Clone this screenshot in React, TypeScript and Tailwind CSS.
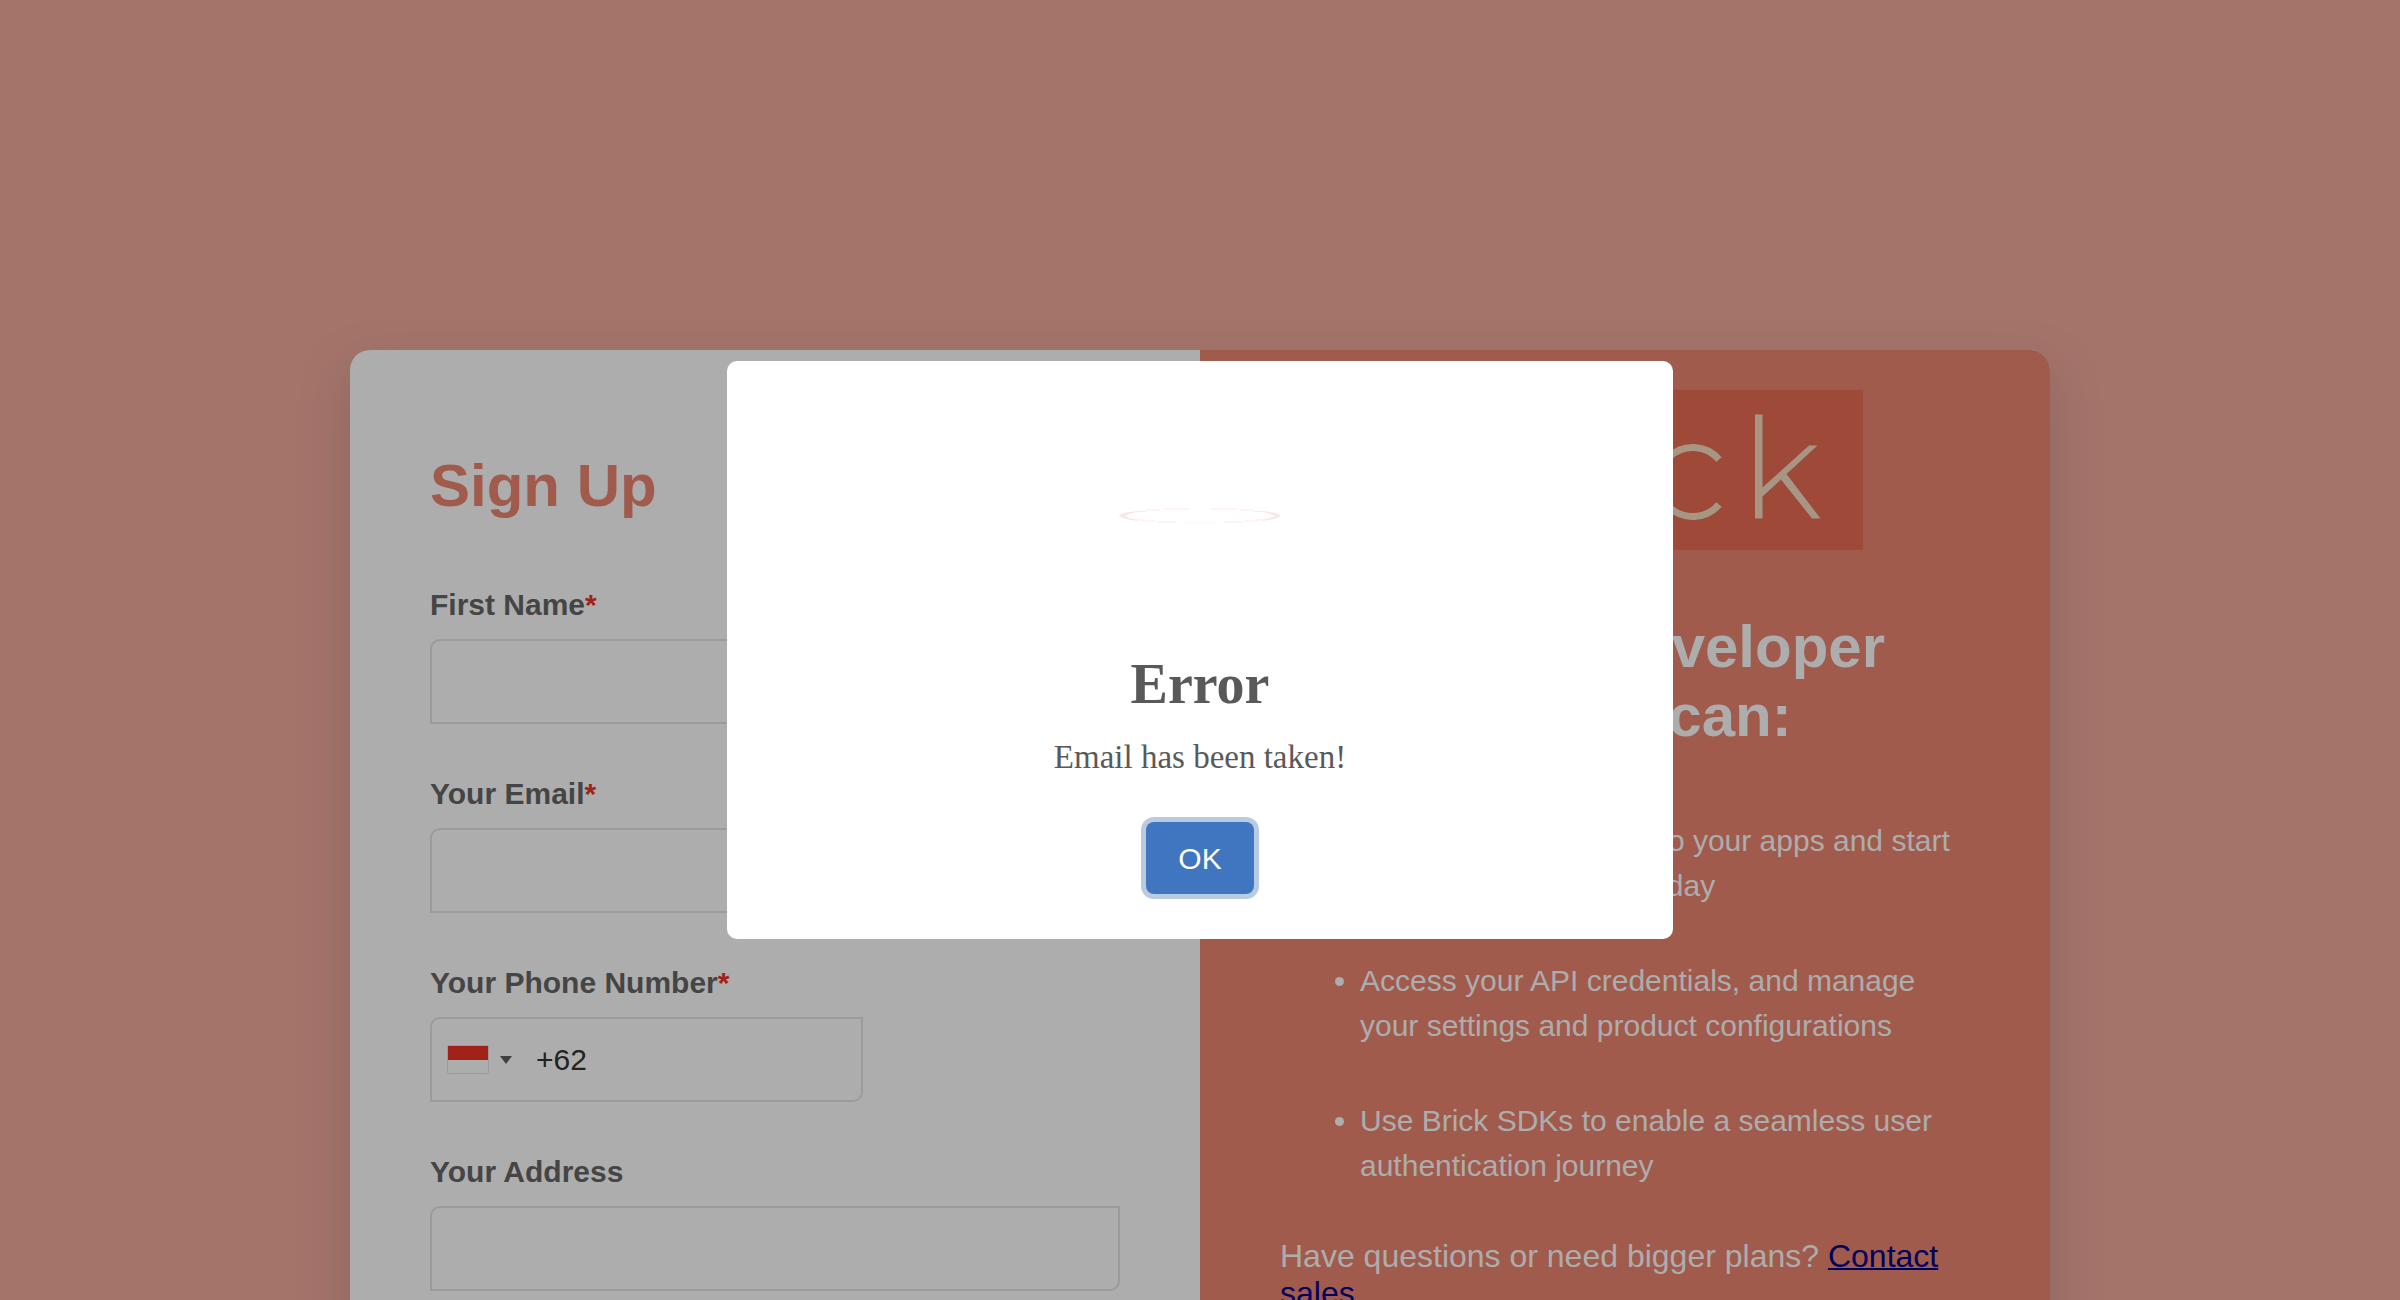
const fieldClass =
  "block h-[85px] rounded-tl-[10px] rounded-br-[10px] border-2 border-[#9b9b9b] bg-transparent px-4 text-[30px] text-[#222222] outline-none";

function Label({ htmlFor, text, required }: { htmlFor: string; text: string; required?: boolean }) {
  return (
    <label htmlFor={htmlFor} className="block pb-4 text-[30px] leading-9 font-bold text-[#454545]">
      {text}
      {required && <span className="text-[#a02218]">*</span>}
    </label>
  );
}

function Logo() {
  return (
    <svg
      role="img"
      aria-label="brick"
      viewBox="0 0 476 160"
      className="mx-auto block h-40 w-[476px] bg-[#9f4938]"
      fill="none"
      stroke="#a79683"
      strokeWidth="7"
    >
      <path d="M44 24v105M44 92a34 34 0 1 1 68 0a34 34 0 1 1-68 0" />
      <path d="M146 129V55M146 86c2-18 14-27 32-27" />
      <path d="M214 129V55M214 30v8" />
      <path d="M332 69.500A34.500 34.500 0 1 0 332 114.500" />
      <path
        stroke="none"
        fill="#a79683"
        d="M368 24.500h7.500V97.500L422 55.500h8.500L399.500 84L433.500 128.500h-8.500L394 89.500L375.500 106.500V128.500H368z"
      />
    </svg>
  );
}

function ErrorRing() {
  return (
    <svg viewBox="0 0 492 48" className="mt-[147px] h-4 w-[164px]" fill="none" stroke="#fbe9e8" strokeWidth="3">
      <path
        stroke="none"
        fill="#fbe6e5"
        d="M3 23C8 17 26 12 58 9v3C40 15 28 19 25 23s15 9 33 12v3C26 34 8 29 3 23z"
      />
      <path
        stroke="none"
        fill="#fbe6e5"
        d="M489 23C484 17 466 12 434 9v3C452 15 464 19 467 23s-15 9-33 12v3C466 34 484 29 489 23z"
      />
      <path d="M56 10h30M84 6h42M136 3h80M276 3h80M364 6h42M406 10h30" />
      <path d="M50 36h26M74 39h38M116 42h58M318 42h58M380 39h38M416 36h26" />
      <path d="M200 45h92" stroke="#fdf5f5" />
    </svg>
  );
}

export default function App() {
  return (
    <div className="relative h-screen overflow-hidden bg-[#a4746a] font-['Liberation_Sans',Arial,sans-serif]">
      <main className="mx-auto mt-[350px] grid min-h-[1100px] max-w-[1700px] grid-cols-2 overflow-hidden rounded-[20px] bg-[#adadad] shadow-[0_20px_50px_rgba(85,75,75,0.32)]">
        <form className="px-20 pt-[101px]">
          <h1 className="text-[60px] leading-[69px] font-bold text-[#a15b4d]">Sign Up</h1>
          <div className="mt-[67px] flex flex-col gap-[52px]">
            <div>
              <Label htmlFor="first-name" text="First Name" required />
              <input id="first-name" type="text" className={`${fieldClass} w-full`} />
            </div>
            <div>
              <Label htmlFor="email" text="Your Email" required />
              <input id="email" type="email" className={`${fieldClass} w-full`} />
            </div>
            <div>
              <Label htmlFor="phone" text="Your Phone Number" required />
              <div className="flex h-[85px] w-[433px] items-center rounded-tl-[10px] rounded-br-[10px] border-2 border-[#9b9b9b] pl-[15px]">
                <button type="button" aria-label="Indonesia, country code 62" className="flex items-center gap-[11px]">
                  <span className="block h-[29px] w-[42px] rounded-[2px] border border-[#9b9b9b]">
                    <span className="block h-[14px] bg-[#a02218]" />
                  </span>
                  <svg viewBox="0 0 12 8" className="h-2 w-3" fill="#404040">
                    <path d="M0 0h12L6 8z" />
                  </svg>
                </button>
                <input
                  id="phone"
                  type="tel"
                  defaultValue="+62"
                  className="ml-6 min-w-0 flex-1 bg-transparent text-[30px] text-[#222222] outline-none"
                />
              </div>
            </div>
            <div>
              <Label htmlFor="address" text="Your Address" />
              <input id="address" type="text" className={`${fieldClass} w-full`} />
            </div>
          </div>
        </form>

        <section className="bg-[#a15b4d] px-20 pt-10 text-[#adadad]">
          <Logo />
          <h2 className="mt-[62px] text-center text-[60px] leading-[69px] font-bold">
            Fintech Developer
            <br />
            people can:
          </h2>
          <ul className="mt-[68px] flex list-disc flex-col gap-[50px] pl-20 text-[30px] leading-[45px]">
            <li>
              Integrate Brick’s flows to your apps and start
              <br />
              connecting accounts today
            </li>
            <li>Access your API credentials, and manage your settings and product configurations</li>
            <li>Use Brick SDKs to enable a seamless user authentication journey</li>
          </ul>
          <p className="mt-[50px] text-[32px] leading-[37px]">
            Have questions or need bigger plans?{" "}
            <a href="#contact" className="text-[#00005c] underline decoration-2">
              Contact sales
            </a>
          </p>
        </section>
      </main>

      <div className="absolute inset-0 flex items-center justify-center">
        <div
          role="dialog"
          aria-modal="true"
          aria-labelledby="dialog-title"
          aria-describedby="dialog-text"
          className="flex w-[946px] flex-col items-center rounded-[10px] bg-white px-10 pb-[45px] font-['Liberation_Serif','Times_New_Roman',serif] text-[#595959]"
        >
          <ErrorRing />
          <h2 id="dialog-title" className="mt-[128px] text-[56px] leading-[64px] font-bold">
            Error
          </h2>
          <p id="dialog-text" className="mt-[22px] text-[33px] leading-[38px]">
            Email has been taken!
          </p>
          <button
            type="button"
            className="mt-[46px] h-[72px] rounded-lg bg-[#3f76bf] px-8 font-['Liberation_Sans',Arial,sans-serif] text-[30px] text-white ring-5 ring-[#b9cbe3]"
          >
            OK
          </button>
        </div>
      </div>
    </div>
  );
}
